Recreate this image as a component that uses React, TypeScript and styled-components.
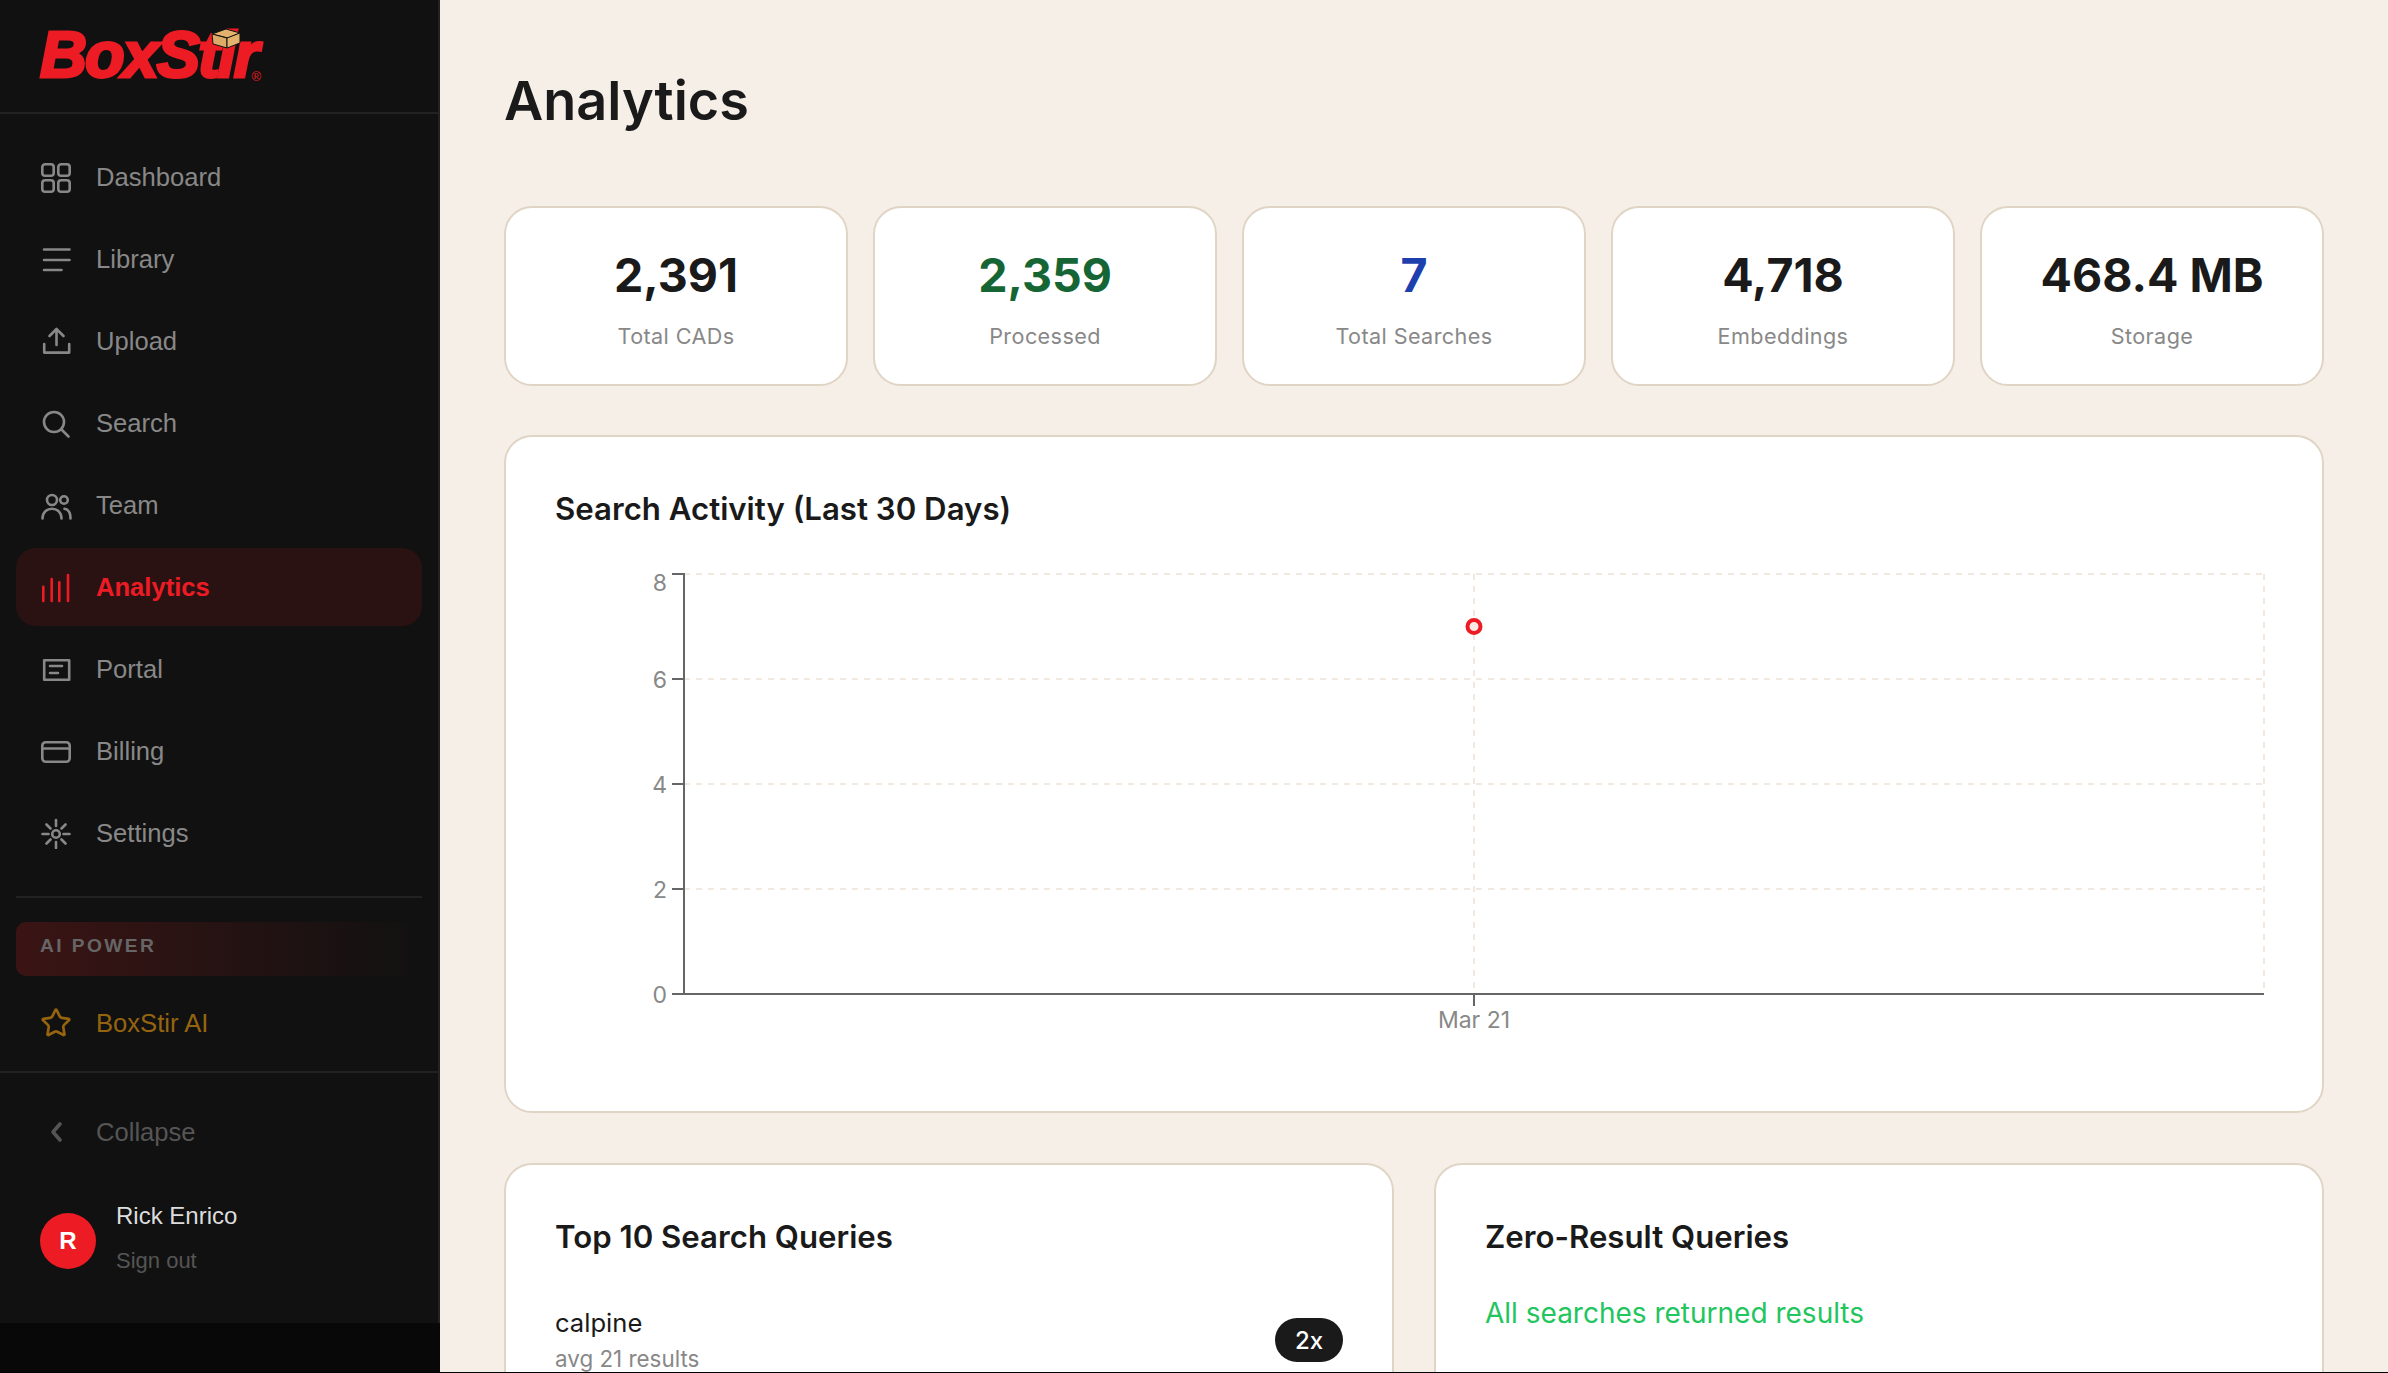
import React from 'react';
import styled, { createGlobalStyle } from 'styled-components';
import { Star } from 'lucide-react';

const GlobalStyle = createGlobalStyle`
  * { box-sizing: border-box; }
  html, body { margin: 0; height: 100%; background: #080808; }
  body { font-family: Inter, "Liberation Sans", sans-serif; overflow: hidden; }
`;

const Shell = styled.div`
  display: flex;
  height: 1372px;
  overflow: hidden;
`;

const Sidebar = styled.aside`
  width: 440px;
  flex: none;
  height: 1323px;
  display: flex;
  flex-direction: column;
  background: #111111;
  border-right: 2px solid #222222;
  font-family: "Liberation Sans", sans-serif;
`;

const LogoBar = styled.div`
  height: 114px;
  flex: none;
  padding: 26px 0 0 40px;
  border-bottom: 2px solid #222222;
`;

const Logo = styled.div`
  position: relative;
  width: 223px;
  height: 54px;
`;

const LogoWord = styled.span`
  display: block;
  font-family: "Liberation Sans", sans-serif;
  font-weight: 700;
  font-style: italic;
  font-size: 65px;
  line-height: 54px;
  letter-spacing: -2px;
  margin-top: 2px;
  color: #ed1c24;
  -webkit-text-stroke: 3px #ed1c24;
`;

const LogoMark = styled.span`
  position: absolute;
  right: 2px;
  bottom: -1px;
  font-size: 13px;
  line-height: 13px;
  color: #ed1c24;
`;

const LogoBox = styled.svg`
  position: absolute;
  left: 171px;
  top: 0;
`;

const Nav = styled.nav`
  display: flex;
  flex-direction: column;
  gap: 4px;
  padding: 24px 16px 0;
`;

const NavRow = styled.div<{ $active?: boolean; $tone?: string }>`
  height: 78px;
  flex: none;
  display: flex;
  align-items: center;
  gap: 24px;
  padding-left: 24px;
  border-radius: 20px;
  font-size: 25.6px;
  font-weight: ${(p) => (p.$active ? 700 : 400)};
  background: ${(p) => (p.$active ? '#2a1213' : 'transparent')};
  color: ${(p) => p.$tone || '#888888'};
`;

const NavIcon = styled.svg<{ $weight?: number }>`
  width: 32px;
  height: 32px;
  flex: none;
  fill: none;
  stroke: currentColor;
  stroke-width: ${(p) => p.$weight || 2.6};
  stroke-linecap: round;
  stroke-linejoin: round;
`;

const SideDivider = styled.div`
  height: 2px;
  margin: 24px 16px;
  flex: none;
  background: #222222;
`;

const AiHeading = styled.div`
  height: 54px;
  flex: none;
  margin: 0 16px 8px;
  padding: 12px 24px 0;
  border-radius: 10px;
  background: linear-gradient(to right, #3b1414, #111111);
  color: #666666;
  font-size: 19.2px;
  font-weight: 700;
  line-height: 24px;
  letter-spacing: 2.4px;
`;

const AiRow = styled.div`
  padding: 0 16px 9px;
  border-bottom: 2px solid #222222;
`;

const CollapseRow = styled.div`
  padding: 20px 16px 0;
`;

const UserRow = styled.div`
  display: flex;
  align-items: center;
  gap: 20px;
  padding: 27px 0 0 40px;
`;

const Avatar = styled.div`
  width: 56px;
  height: 56px;
  flex: none;
  display: flex;
  align-items: center;
  justify-content: center;
  border-radius: 50%;
  background: #ed1c24;
  color: #ffffff;
  font-size: 24px;
  font-weight: 700;
`;

const UserText = styled.div`
  display: flex;
  flex-direction: column;
  gap: 11px;
  padding-bottom: 7px;
`;

const UserName = styled.div`
  font-size: 24px;
  line-height: 36px;
  color: #dddddd;
`;

const SignOut = styled.div`
  font-size: 22px;
  line-height: 32px;
  color: #555555;
`;

const Main = styled.main`
  flex: 1;
  min-width: 0;
  height: 100%;
  display: flex;
  flex-direction: column;
  padding: 69px 64px 0;
  background: #f6efe8;
  overflow: hidden;
`;

const PageTitle = styled.h1`
  margin: 0 0 73px;
  font-size: 54px;
  line-height: 64px;
  font-weight: 600;
  color: #1a1a1a;
`;

const StatGrid = styled.div`
  display: grid;
  grid-template-columns: repeat(5, 1fr);
  gap: 25px;
  margin-bottom: 49px;
`;

const Panel = styled.section`
  flex: none;
  background: #ffffff;
  border: 2px solid #e0d5c5;
  border-radius: 28px;
`;

const StatCard = styled(Panel)`
  height: 180px;
  padding-top: 39px;
  text-align: center;
`;

const StatValue = styled.div<{ $color?: string }>`
  font-size: 46.5px;
  line-height: 56px;
  font-weight: 700;
  color: ${(p) => p.$color || '#1a1a1a'};
`;

const StatLabel = styled.div`
  margin-top: 17px;
  font-size: 21.6px;
  line-height: 32px;
  letter-spacing: 0.4px;
  color: #888888;
`;

const ChartCard = styled(Panel)`
  height: 678px;
  padding: 49px;
  margin-bottom: 50px;
`;

const CardTitle = styled.h2`
  margin: 0;
  font-size: 31.2px;
  line-height: 47px;
  font-weight: 600;
  color: #1a1a1a;
`;

const ChartSvg = styled.svg`
  display: block;
  margin-top: 29px;
  overflow: visible;
`;

const AxisText = styled.text`
  font-family: Inter, sans-serif;
  font-size: 23px;
  fill: #888888;
`;

const BottomGrid = styled.div`
  display: grid;
  grid-template-columns: 1fr 1fr;
  gap: 40px;
`;

const ListCard = styled(Panel)`
  height: 400px;
  padding: 49px;
`;

const QueryRow = styled.div`
  display: flex;
  align-items: center;
  justify-content: space-between;
  margin-top: 45px;
`;

const QueryName = styled.div`
  font-size: 25.6px;
  line-height: 34px;
  color: #1a1a1a;
`;

const QueryMeta = styled.div`
  margin-top: 2px;
  font-size: 22.4px;
  line-height: 34px;
  color: #888888;
`;

const CountBadge = styled.div`
  width: 68px;
  height: 44px;
  margin-top: -2px;
  display: flex;
  align-items: center;
  justify-content: center;
  border-radius: 22px;
  background: #1a1a1a;
  color: #ffffff;
  font-size: 24px;
  font-weight: 500;
`;

const EmptyNote = styled.div`
  margin-top: 34px;
  font-size: 28px;
  line-height: 36px;
  color: #22c55e;
`;

const BottomEdge = styled.div`
  height: 1px;
  background: #000000;
`;

const navItems = [
  {
    label: 'Dashboard',
    icon: (
      <>
        <rect x="2.3" y="3.3" width="11.4" height="11.4" rx="2.8" />
        <rect x="18.3" y="3.3" width="11.4" height="11.4" rx="2.8" />
        <rect x="2.3" y="19.3" width="11.4" height="11.4" rx="2.8" />
        <rect x="18.3" y="19.3" width="11.4" height="11.4" rx="2.8" />
      </>
    ),
  },
  {
    label: 'Library',
    icon: <path d="M4 6.500h25.500M4 17h25.500M4 27h17.500" />,
  },
  {
    label: 'Upload',
    icon: <path d="M4.200 19v8.600h25V19M16.500 20V4.500M9.500 11l7-7 7 7" />,
  },
  {
    label: 'Search',
    icon: (
      <>
        <circle cx="14" cy="15" r="10" />
        <path d="M21.500 22.500l7 7" />
      </>
    ),
  },
  {
    label: 'Team',
    icon: (
      <>
        <circle cx="12" cy="11" r="5" />
        <circle cx="24" cy="11" r="3.800" />
        <path d="M2.500 29.500c0-6 4.200-9.800 9.500-9.800s9.500 3.800 9.500 9.800M24.500 19.800c3.600.6 6 4.200 6 9.700" />
      </>
    ),
  },
  {
    label: 'Analytics',
    active: true,
    icon: <path d="M3.300 15.700V30M11.700 8v22M19.300 11.300V30M28 4v26" />,
  },
  {
    label: 'Portal',
    icon: (
      <>
        <rect x="4.200" y="7.200" width="25" height="19.600" />
        <path d="M10 13h12M10 20h8" />
      </>
    ),
  },
  {
    label: 'Billing',
    icon: (
      <>
        <rect x="2.300" y="7.200" width="27.400" height="19.600" rx="3.500" />
        <path d="M2.300 13.500h27.400" />
      </>
    ),
  },
  {
    label: 'Settings',
    icon: (
      <>
        <circle cx="16" cy="17" r="3.800" />
        <path d="M16 3v6M16 25v6M2.500 17h6M23.500 17h6M6.500 7.500l4 4M21.500 22.500l4 4M6.500 26.500l4-4M21.500 11.500l4-4" />
      </>
    ),
  },
];

const stats = [
  { value: '2,391', label: 'Total CADs' },
  { value: '2,359', label: 'Processed', color: '#166534' },
  { value: '7', label: 'Total Searches', color: '#1e40af' },
  { value: '4,718', label: 'Embeddings' },
  { value: '468.4 MB', label: 'Storage' },
];

// chart frame in svg coordinates, svg origin sits at 555,562 on the page
const plot = { left: 129, right: 1709, top: 12, bottom: 432 };
const yTicks = [0, 2, 4, 6, 8];
const yFor = (v: number) => plot.bottom - ((plot.bottom - plot.top) * v) / 8;
const pointX = 919;

const SearchChart = () => (
  <ChartSvg width={1718} height={500} viewBox="0 0 1718 500">
    <g stroke="#f1e9df" strokeWidth={2} strokeDasharray="6 6" fill="none">
      {yTicks.slice(1).map((v) => (
        <line key={v} x1={plot.left} x2={plot.right} y1={yFor(v)} y2={yFor(v)} />
      ))}
      <line x1={pointX} x2={pointX} y1={plot.top} y2={plot.bottom} />
      <line x1={plot.right} x2={plot.right} y1={plot.top} y2={plot.bottom} />
    </g>
    <g stroke="#666666" strokeWidth={2} fill="none">
      <line x1={plot.left} x2={plot.left} y1={plot.top - 1} y2={plot.bottom + 1} />
      <line x1={plot.left} x2={plot.right} y1={plot.bottom} y2={plot.bottom} />
      {yTicks.map((v) => (
        <line key={v} x1={plot.left - 12} x2={plot.left} y1={yFor(v)} y2={yFor(v)} />
      ))}
      <line x1={pointX} x2={pointX} y1={plot.bottom} y2={plot.bottom + 12} />
    </g>
    {yTicks.map((v) => (
      <AxisText key={v} x={plot.left - 17} y={yFor(v) + (v === 8 ? 17 : 9)} textAnchor="end">
        {v}
      </AxisText>
    ))}
    <AxisText x={pointX} y={466} textAnchor="middle">
      Mar 21
    </AxisText>
    <circle cx={pointX} cy={yFor(7)} r={6.5} fill="#fbe9e6" stroke="#ed1c24" strokeWidth={4} />
  </ChartSvg>
);

export default function App() {
  return (
    <>
      <GlobalStyle />
      <Shell>
        <Sidebar>
          <LogoBar>
            <Logo>
              <LogoWord>BoxStir</LogoWord>
              <LogoBox width="30" height="21" viewBox="0 0 30 21">
                <path d="M1 6 15 1l14 4-12 5z" fill="#e3b26c" stroke="#111111" strokeWidth="1" />
                <path d="M1 6l15 4v10L2 16z" fill="#dcaa66" stroke="#111111" strokeWidth="1" />
                <path d="M16 10l13-5v10l-13 5z" fill="#e3b26c" stroke="#111111" strokeWidth="1" />
              </LogoBox>
              <LogoMark>®</LogoMark>
            </Logo>
          </LogoBar>
          <Nav>
            {navItems.map((item) => (
              <NavRow key={item.label} $active={item.active} $tone={item.active ? '#ed1c24' : undefined}>
                <NavIcon viewBox="0 0 32 32">{item.icon}</NavIcon>
                {item.label}
              </NavRow>
            ))}
          </Nav>
          <SideDivider />
          <AiHeading>AI POWER</AiHeading>
          <AiRow>
            <NavRow $tone="#96640f">
              <Star size={32} strokeWidth={2} />
              BoxStir AI
            </NavRow>
          </AiRow>
          <CollapseRow>
            <NavRow $tone="#555555">
              <NavIcon viewBox="0 0 32 32" $weight={3.6}>
                <path d="M20 8l-7 8 7 8" />
              </NavIcon>
              Collapse
            </NavRow>
          </CollapseRow>
          <UserRow>
            <Avatar>R</Avatar>
            <UserText>
              <UserName>Rick Enrico</UserName>
              <SignOut>Sign out</SignOut>
            </UserText>
          </UserRow>
        </Sidebar>
        <Main>
          <PageTitle>Analytics</PageTitle>
          <StatGrid>
            {stats.map((s) => (
              <StatCard key={s.label}>
                <StatValue $color={s.color}>{s.value}</StatValue>
                <StatLabel>{s.label}</StatLabel>
              </StatCard>
            ))}
          </StatGrid>
          <ChartCard>
            <CardTitle>Search Activity (Last 30 Days)</CardTitle>
            <SearchChart />
          </ChartCard>
          <BottomGrid>
            <ListCard>
              <CardTitle>Top 10 Search Queries</CardTitle>
              <QueryRow>
                <div>
                  <QueryName>calpine</QueryName>
                  <QueryMeta>avg 21 results</QueryMeta>
                </div>
                <CountBadge>2x</CountBadge>
              </QueryRow>
            </ListCard>
            <ListCard>
              <CardTitle>Zero-Result Queries</CardTitle>
              <EmptyNote>All searches returned results</EmptyNote>
            </ListCard>
          </BottomGrid>
        </Main>
      </Shell>
      <BottomEdge />
    </>
  );
}
